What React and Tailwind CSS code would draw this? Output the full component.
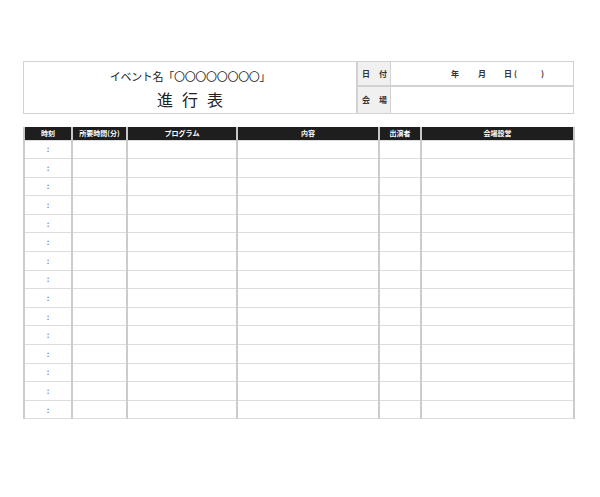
const columns = [
  { label: "時刻", w: "w-[48px]" },
  { label: "所要時間(分)", w: "w-[55px]" },
  { label: "プログラム", w: "w-[110px]" },
  { label: "内容", w: "w-[142px]" },
  { label: "出演者", w: "w-[42px]" },
  { label: "会場設営", w: "w-[153px]" },
];

const rows = Array.from({ length: 15 }, (_, i) => i);

function HeaderBox() {
  return (
    <div className="flex h-[53px] w-[551px] border border-[#d2d2d2]">
      <div className="flex w-[334px] flex-col items-center border-r-2 border-[#d2d2d2]">
        <div className="mt-[6px] text-[11px] leading-[16px] tracking-[-0.3px] text-[#222]">
          イベント名「〇〇〇〇〇〇〇〇」
        </div>
        <div className="mt-[5px] pl-[9px] text-[16px] leading-[20px] tracking-[9px] text-[#222]">
          進行表
        </div>
      </div>
      <div className="flex w-[33px] flex-col border-r border-[#d2d2d2] bg-[#f0f0f0]">
        <div className="flex h-[25px] items-center gap-[9px] border-b-2 border-[#d2d2d2] pl-[4px] text-[8px] font-bold text-[#333]">
          <span>日</span>
          <span>付</span>
        </div>
        <div className="flex flex-1 items-center gap-[9px] pl-[4px] text-[8px] font-bold text-[#333]">
          <span>会</span>
          <span>場</span>
        </div>
      </div>
      <div className="flex flex-1 flex-col">
        <div className="flex h-[25px] items-center border-b-2 border-[#d2d2d2] text-[8px] font-bold text-[#333]">
          <span className="ml-[60px]">年</span>
          <span className="ml-[19px]">月</span>
          <span className="ml-[18px]">日</span>
          <span className="ml-[2px]">(</span>
          <span className="ml-[24px]">)</span>
        </div>
        <div className="flex-1" />
      </div>
    </div>
  );
}

function Schedule() {
  return (
    <table className="mt-[13px] w-[550px] table-fixed border-collapse">
      <thead>
        <tr className="h-[13px] bg-[#1e1e1e]">
          {columns.map((c) => (
            <th
              key={c.label}
              className={`${c.w} border-x-2 border-[#c8c8c8] p-0 text-center text-[7px] font-bold leading-[11px] text-white`}
            >
              {c.label}
            </th>
          ))}
        </tr>
      </thead>
      <tbody>
        {rows.map((r) => (
          <tr key={r} className="h-[18.6px]">
            {columns.map((c, i) => (
              <td
                key={c.label}
                className="border-x-2 border-y border-x-[#cccccc] border-y-[#dcdcdc] p-0 text-center text-[8px] font-bold leading-[10px] text-[#7b8fa8]"
              >
                {i === 0 ? ":" : ""}
              </td>
            ))}
          </tr>
        ))}
      </tbody>
    </table>
  );
}

export default function App() {
  return (
    <div
      className="h-[497px] w-[600px] bg-white pl-[23px] pt-[61px]"
      style={{ fontFamily: '"Noto Sans CJK JP", "Noto Sans", sans-serif' }}
    >
      <HeaderBox />
      <Schedule />
    </div>
  );
}
